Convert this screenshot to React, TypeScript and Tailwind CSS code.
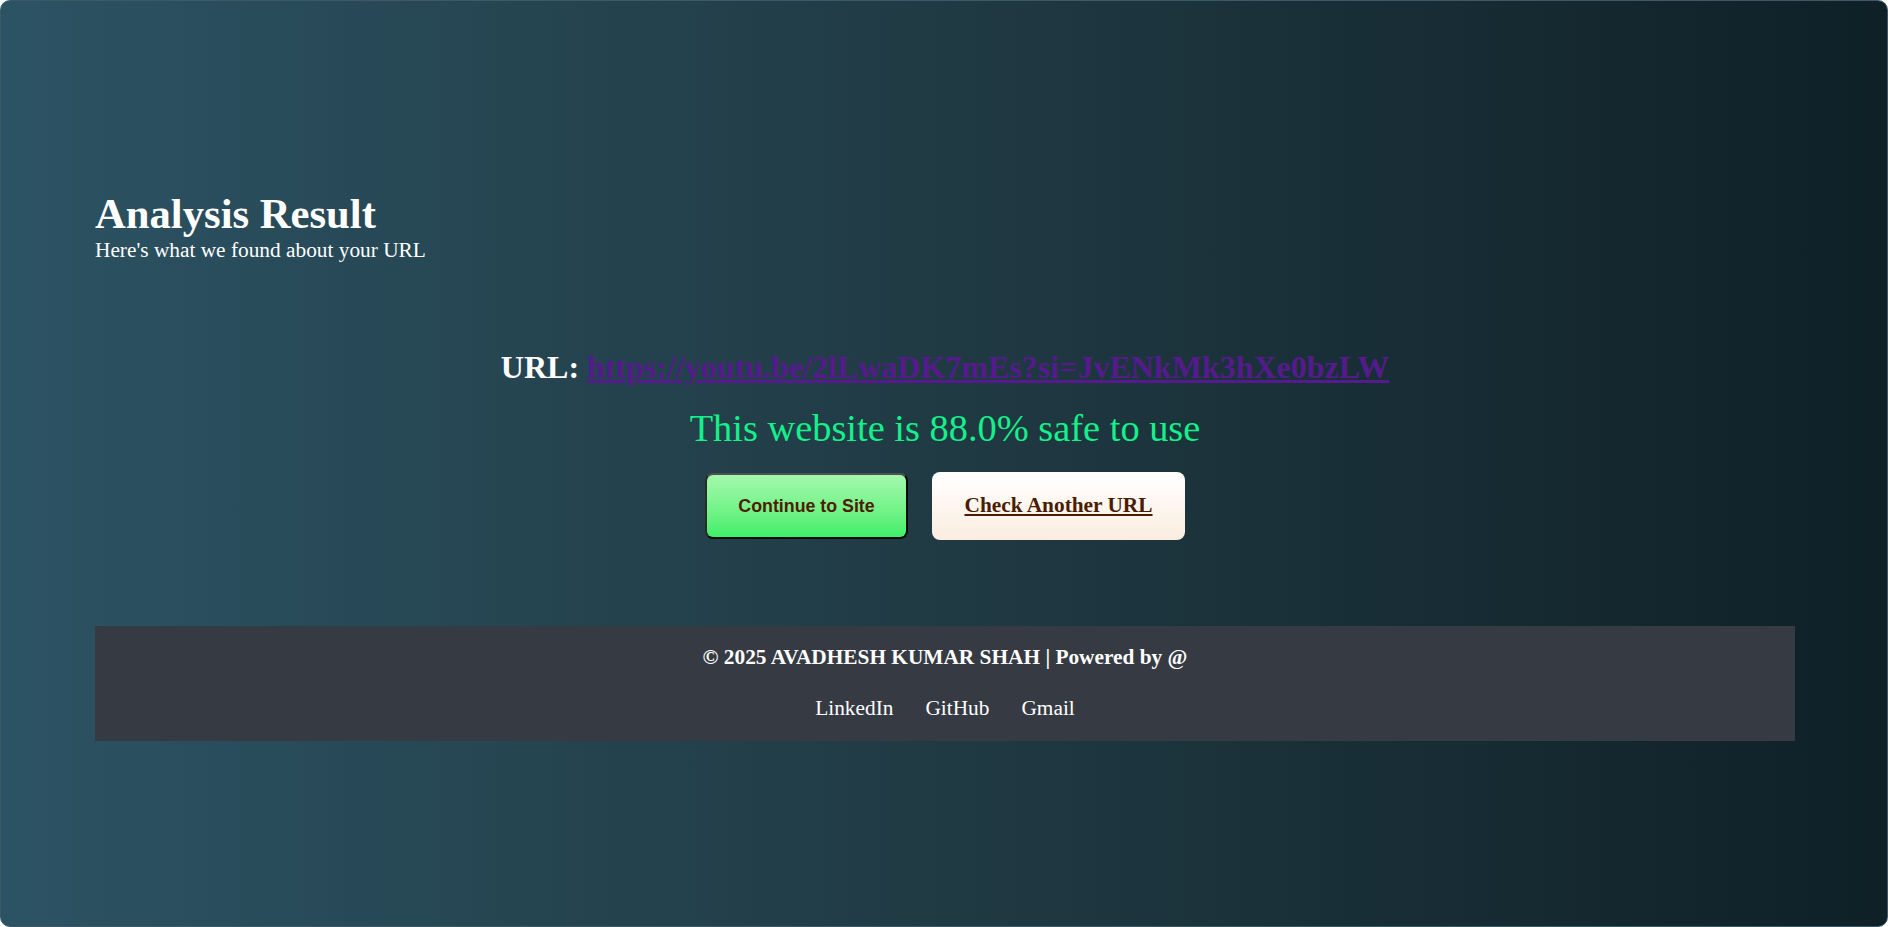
import React from "react";

export default function App() {
  return (
    <div className="h-[927px] w-full overflow-hidden rounded-[10px] border border-[#3b5a66] bg-gradient-to-r from-[#2c5364] via-[#203a43] to-[#0f2027] pl-[94px] pr-[92px] pt-[191px] font-['Liberation_Serif',serif] text-white">
      <h1 className="text-[42.67px] font-bold leading-[43px]">Analysis Result</h1>
      <p className="mt-[3px] text-[21.33px] leading-[24px]">Here's what we found about your URL</p>

      <div className="mt-[87px] text-center text-[32px] font-bold leading-[36px]">
        URL:{" "}
        <a href="#" className="text-[#551a8b] underline">
          https://youtu.be/2lLwaDK7mEs?si=JvENkMk3hXe0bzLW
        </a>
      </div>

      <p className="mt-[21px] text-center text-[38.4px] leading-[44px] text-[#14f08a]">
        This website is 88.0% safe to use
      </p>

      <div className="mt-[22px] flex h-[68px] items-center justify-center gap-[24px]">
        <button className="flex h-[66px] w-[203px] items-center justify-center rounded-[8px] border-2 border-t-[#505050] border-l-[#2a2a2a] border-r-[#0a0a0a] border-b-[#0a0a0a] bg-gradient-to-b from-[#a2f8ad] to-[#3cef69] font-['Liberation_Sans',sans-serif] text-[17.8px] font-bold text-[#4f1c00]">
          Continue to Site
        </button>
        <a
          href="#"
          className="flex h-[68px] w-[253px] items-center justify-center rounded-[8px] bg-gradient-to-b from-[#ffffff] to-[#fbede0] text-[21.33px] font-bold text-[#4a1c00] underline"
        >
          Check Another URL
        </a>
      </div>

      <footer className="mt-[86px] flex flex-col items-center bg-[#363a43] pt-[19px] pb-[21px] text-white">
        <p className="text-[21.33px] font-bold leading-[24px]">© 2025 AVADHESH KUMAR SHAH | Powered by @</p>
        <div className="mt-[27px] flex gap-[32px] text-[21.33px] leading-[24px]">
          <a href="#">LinkedIn</a>
          <a href="#">GitHub</a>
          <a href="#">Gmail</a>
        </div>
      </footer>
    </div>
  );
}
